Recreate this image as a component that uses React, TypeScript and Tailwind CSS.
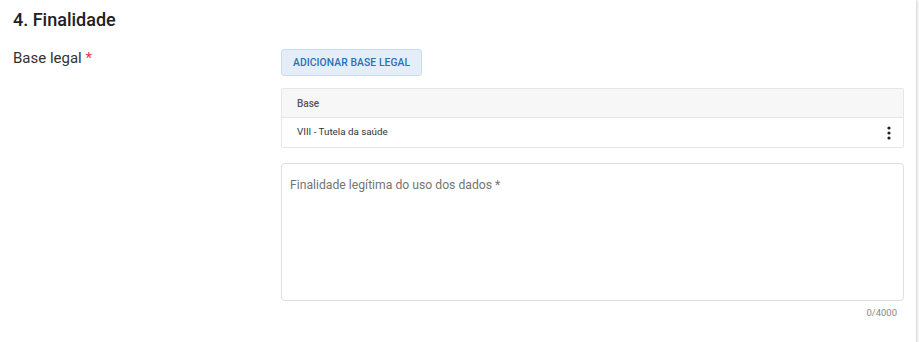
import React from "react";

export default function App() {
  return (
    <div className="w-[919px] h-[342px] bg-[#f5f5f5] overflow-hidden" style={{ fontFamily: "Roboto, 'Liberation Sans', sans-serif" }}>
      <div className="w-[916px] h-[360px] bg-white shadow-[0_1px_3px_rgba(0,0,0,0.2),0_1px_1px_rgba(0,0,0,0.12)] pt-[9px]">
        <h2 className="pl-[13px] text-[18px] leading-[22px] font-medium text-[#212121]">4. Finalidade</h2>
        <div className="flex mt-[18px]">
          <div className="w-[281px] pl-[13px] text-[15px] leading-[18px] text-[#333] pt-[0px]">
            Base legal <span className="text-[#e53935]">*</span>
          </div>
          <div className="w-[623px] flex flex-col">
            <div>
              <button className="h-[27px] px-[11px] rounded-[3px] border border-[#c9dced] bg-[#e3eef9] text-[10.3px] font-medium tracking-[0.1px] text-[#2a6fb8]">
                ADICIONAR BASE LEGAL
              </button>
            </div>
            <div className="mt-[12px] border border-[#e6e6e6] rounded-[2px]">
              <div className="h-[29px] bg-[#f7f7f7] border-b border-[#e6e6e6] flex items-center pl-[15px] text-[10px] font-medium text-[#555]">
                Base
              </div>
              <div className="h-[29px] flex items-center justify-between pl-[15px] pr-[12px] text-[9.8px] text-[#333]">
                <span>VIII - Tutela da saúde</span>
                <svg width="4" height="14" viewBox="0 0 4 14">
                  <circle cx="2" cy="2" r="1.6" fill="#222" />
                  <circle cx="2" cy="7" r="1.6" fill="#222" />
                  <circle cx="2" cy="12" r="1.6" fill="#222" />
                </svg>
              </div>
            </div>
            <div className="mt-[15px] h-[138px] border border-[#e0e0e0] rounded-[4px] px-[8px] pt-[14px]">
              <div className="text-[12.2px] leading-[14px] text-[#757575]">Finalidade legítima do uso dos dados *</div>
            </div>
            <div className="text-right pr-[7px] mt-[6px] text-[9.5px] leading-[12px] text-[#888]">0/4000</div>
          </div>
        </div>
      </div>
    </div>
  );
}
